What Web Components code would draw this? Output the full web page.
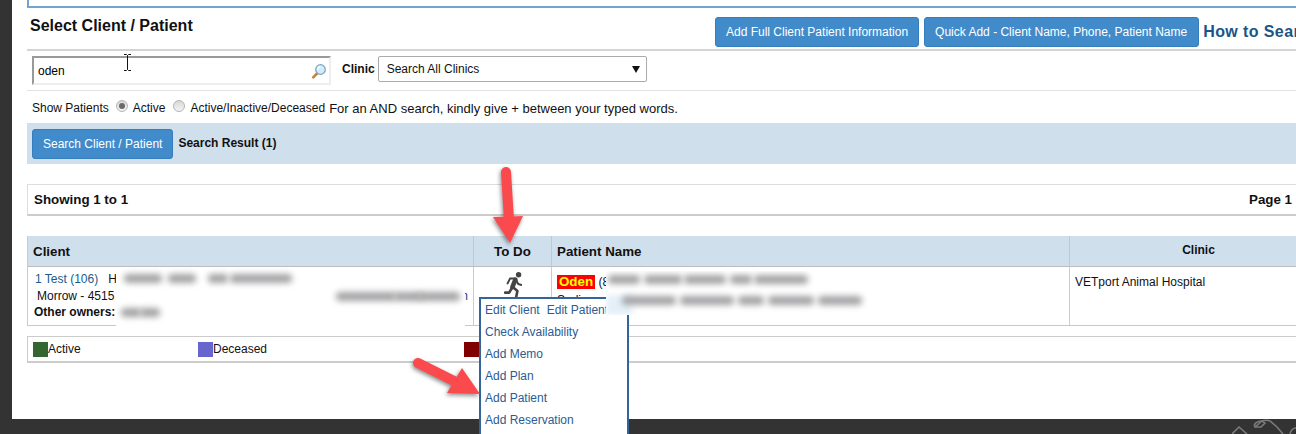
<!DOCTYPE html>
<html>
<head>
<meta charset="utf-8">
<title>Select Client / Patient</title>
<style>
html, body { margin: 0; height: 434px; overflow: hidden; background: #333; font: 12px "Liberation Sans", Arial, sans-serif; color: #000; }
</style>
</head>
<body>
<vet-page>
  <top-box></top-box>
  <title-bar heading="Select Client / Patient">
    <blue-button>Add Full Client Patient Information</blue-button>
    <blue-button style="padding-right:11px">Quick Add - Client Name, Phone, Patient Name</blue-button>
  </title-bar>
  <search-row value="oden"></search-row>
  <patient-filter></patient-filter>
  <search-band></search-band>
  <paging-bar></paging-bar>
  <client-table></client-table>
  <status-legend></status-legend>

  <action-menu></action-menu>
  <blur-mask kind="client"></blur-mask>
  <blur-mask kind="patient"></blur-mask>
  <text-cursor></text-cursor>
  <red-arrow kind="down"></red-arrow>
  <red-arrow kind="right"></red-arrow>
</vet-page>
<page-footer></page-footer>

<script>
class BaseElement extends HTMLElement {
    constructor() {
        super();
        this.attachShadow({ mode: 'open' });
    }

    connectedCallback() {
        this.shadowRoot.innerHTML = this.html();
    }
}

class VetPage extends BaseElement {
    html() {
        return `
            <style>
                :host { display: block; position: relative; margin-left: 12px; height: 419px; background: #fff; padding-left: 15px; box-sizing: border-box; }
            </style>
            <slot></slot>
        `;
    }
}

class TopBox extends BaseElement {
    html() {
        return `
            <style>
                :host { display: block; width: 1300px; height: 8px; box-sizing: border-box; border: 2px solid #70a5d2; border-top: 0; }
            </style>
        `;
    }
}

class BlueButton extends BaseElement {
    html() {
        return `
            <style>
                :host { display: inline-flex; align-items: center; height: 30px; box-sizing: border-box; padding: 0 10px; background: #428bca; border: 1px solid #357ebd; border-radius: 3px; color: #fff; font-size: 12px; white-space: nowrap; }
            </style>
            <slot></slot>
        `;
    }
}

class TitleBar extends BaseElement {
    html() {
        return `
            <style>
                :host { display: flex; width: 1300px; height: 43px; box-sizing: border-box; padding: 9px 0 0 3px; border-bottom: 2px solid #d4d4d4; white-space: nowrap; }
                h2 { flex: 1; margin: 0; font-size: 16px; line-height: 18px; font-weight: 700; color: #111; }
                .actions { display: flex; gap: 5px; width: 612px; }
                a { margin-left: -1px; font-size: 16px; line-height: 30px; font-weight: 700; color: #1b5586; letter-spacing: .4px; }
            </style>
            <h2>${this.getAttribute('heading')}</h2>
            <div class="actions"><slot></slot><a>How to Search</a></div>
        `;
    }
}

class SearchRow extends BaseElement {
    html() {
        return `
            <style>
                :host { display: flex; width: 1300px; height: 40px; box-sizing: border-box; padding: 5px 0 0 5px; border-bottom: 1px solid #e2e2e2; }
                .input { display: flex; align-items: center; justify-content: space-between; width: 299px; height: 29px; box-sizing: border-box; padding: 1px 2px 0 4px; border: 2px solid; border-color: #999 #eee #eee #999; }
                .input svg { display: block; margin-top: 1px; }
                label { margin: 0 3px 0 11px; line-height: 26px; font-weight: 700; color: #111; }
                .select { position: relative; width: 269px; height: 26px; box-sizing: border-box; padding-left: 8px; border: 1px solid #aaa; border-radius: 2px; line-height: 24px; color: #111; }
                .select i { position: absolute; right: 6px; top: 9px; border: 4px solid transparent; border-top: 7px solid #111; border-bottom: 0; }
            </style>
            <div class="input">
                <span>${this.getAttribute('value')}</span>
                <svg width="16" height="17" viewBox="0 0 16 17">
                    <path d="M6.5 10 2.2 14.4" stroke="#c8823a" stroke-width="2.6" stroke-linecap="round"/>
                    <circle cx="9.500" cy="6.500" r="4.800" fill="#d3ebfa" stroke="#7fa6bd" stroke-width="1.300"/>
                    <path d="M6.800 6.500a2.800 2.800 0 0 1 2.600-2.800" fill="none" stroke="#fff" stroke-width="1.200"/>
                </svg>
            </div>
            <label>Clinic</label>
            <div class="select">Search All Clinics<i></i></div>
        `;
    }
}

class RadioDot extends BaseElement {
    html() {
        const dot = this.hasAttribute('checked') ? '<i></i>' : '';
        return `
            <style>
                :host { display: inline-flex; align-items: center; justify-content: center; width: 12px; height: 12px; box-sizing: border-box; border: 1px solid #b4b4b4; border-radius: 50%; background: linear-gradient(#d8d8d8, #f4f4f4); }
                i { width: 6px; height: 6px; border-radius: 50%; background: #6a6a6a; }
            </style>
            ${dot}
        `;
    }
}

class PatientFilter extends BaseElement {
    html() {
        return `
            <style>
                :host { display: flex; align-items: center; height: 32px; box-sizing: border-box; padding: 2px 0 0 5px; white-space: nowrap; color: #111; }
                radio-dot { position: relative; top: -2px; }
                .first { margin: 0 5px 0 7px; }
                .second { margin: 0 5px 0 8px; }
                span { margin-left: 4px; font-size: 13px; }
            </style>
            Show Patients
            <radio-dot class="first" checked></radio-dot>Active
            <radio-dot class="second"></radio-dot>Active/Inactive/Deceased<span>For an AND search, kindly give + between your typed words.</span>
        `;
    }
}

class SearchBand extends BaseElement {
    html() {
        return `
            <style>
                :host { display: flex; align-items: flex-start; width: 1300px; height: 41px; box-sizing: border-box; padding: 6px 0 0 5px; background: #d0dfec; }
                b { margin-left: 5px; line-height: 28px; font-size: 12px; color: #111; }
            </style>
            <blue-button>Search Client / Patient</blue-button>
            <b>Search Result (1)</b>
        `;
    }
}

class PagingBar extends BaseElement {
    html() {
        return `
            <style>
                :host { display: flex; justify-content: space-between; align-items: center; width: 1300px; height: 32px; margin-top: 20px; box-sizing: border-box; padding: 0 34px 0 6px; border: 1px solid #ddd; border-bottom: 2px solid #ccc; font-size: 13.33px; font-weight: 700; color: #111; }
            </style>
            <span>Showing 1 to 1</span><span>Page 1</span>
        `;
    }
}

class ClientTable extends BaseElement {
    html() {
        return `
            <style>
                :host { display: grid; grid-template-columns: 446px 78px 518px 258px; grid-template-rows: 31px 58px; width: 1300px; margin-top: 20px; box-sizing: border-box; border-left: 1px solid #ccc; border-bottom: 1px solid #c8c8c8; color: #111; }
                .head { background: #d0dfec; border-bottom: 1px solid #bdbdbd; border-right: 1px solid #c4c8cc; box-sizing: border-box; font-size: 13.33px; font-weight: 700; line-height: 32px; padding-left: 5px; color: #111; }
                .todo { text-align: center; padding: 0; }
                .clinic { font-size: 12px; text-align: center; line-height: 29px; padding: 0; }
                .cell { border-right: 1px solid #ccc; box-sizing: border-box; padding: 4px 6px; line-height: 16.5px; overflow: hidden; white-space: nowrap; }
                .client { padding-left: 7px; }
                .client a { color: #1a5a8c; margin-right: 10px; }
                .client b { margin-left: -1px; }
                .line { display: flex; justify-content: space-between; padding-left: 3px; margin-left: -1px; width: 431px; }
                .line a { color: #1a3a8c; margin: 0; }
                .run { display: block; margin: 5px auto 0 auto; }
                .name { padding: 8px 5px; line-height: 15px; }
                .name mark { display: inline-block; height: 14px; line-height: 14px; padding: 0 2px; background: #f00; color: #ff0; font-size: 13.33px; font-weight: 700; }
                .name div { margin-top: 3px; }
                .place { border: 0; padding: 7px 5px; line-height: 16px; }
            </style>
            <div class="head">Client</div>
            <div class="head todo">To Do</div>
            <div class="head">Patient Name</div>
            <div class="head clinic">Clinic</div>
            <div class="cell client">
                <a>1 Test (106)</a>H<br>
                <div class="line"><span>Morrow - 4515</span><a>n</a></div>
                <b>Other owners:</b>
            </div>
            <div class="cell" style="padding:0">
                <svg class="run" width="18" height="25" viewBox="504 272 18 25">
                    <circle cx="518.600" cy="274.800" r="2.700" fill="#444"/>
                    <g fill="none" stroke="#444" stroke-linejoin="round" stroke-linecap="round">
                        <path d="M515.400 279.600 512.400 287" stroke-width="4.600"/>
                        <path d="M514.600 278.600H510L507.600 283.400" stroke-width="2"/>
                        <path d="M516 279.600 518.200 284 521.400 285" stroke-width="2"/>
                        <path d="M512.400 287 509.200 292.600H505" stroke-width="2.600"/>
                        <path d="M512.800 287 517.400 291 516.200 297" stroke-width="2.600"/>
                    </g>
                </svg>
            </div>
            <div class="cell name"><mark>Oden</mark> (8<div>Sadie</div></div>
            <div class="cell place">VETport Animal Hospital</div>
        `;
    }
}

class StatusLegend extends BaseElement {
    html() {
        return `
            <style>
                :host { display: grid; grid-template-columns: 165px 266px 100px; width: 1300px; height: 27px; margin-top: 10px; box-sizing: border-box; padding: 5px 0 0 5px; border: 1px solid #ccc; border-bottom-width: 2px; border-right: 0; color: #111; }
                div { display: flex; line-height: 15px; }
                i { display: block; width: 15px; height: 15px; }
            </style>
            <div><i style="background:#356630"></i>Active</div>
            <div><i style="background:#6666cc"></i>Deceased</div>
            <div><i style="background:#800000"></i></div>
        `;
    }
}

class ActionMenu extends BaseElement {
    html() {
        return `
            <style>
                :host { position: absolute; left: 467px; top: 297px; width: 150px; height: 150px; box-sizing: border-box; padding: 0 4px; background: #fff; border: 2px solid #33659a; color: #2b5b92; line-height: 22px; white-space: nowrap; }
                div { height: 22px; }
                span { margin-left: 7px; }
            </style>
            <div>Edit Client<span>Edit Patient</span></div>
            <div>Check Availability</div>
            <div>Add Memo</div>
            <div>Add Plan</div>
            <div>Add Patient</div>
            <div>Add Reservation</div>
        `;
    }
}

class BlurMask extends BaseElement {
    html() {
        const client = this.getAttribute('kind') === 'client';
        // left, top, width of each smudged word
        const words = client
            ? [[8, 7, 38], [52, 7, 28], [92, 7, 20], [114, 7, 62], [220, 25, 60], [278, 25, 28], [302, 25, 42], [5, 41, 20], [24, 41, 20]]
            : [[2, 4, 32], [38, 4, 38], [78, 4, 42], [124, 4, 22], [148, 4, 54], [16, 25, 54], [74, 25, 54], [132, 25, 26], [162, 25, 46], [212, 25, 44]];
        const box = client
            ? 'left:104px;top:267px;width:349px;height:59px;'
            : 'left:594px;top:271px;width:270px;height:44px;';
        const tint = client ? '' : '<em></em>';
        return `
            <style>
                :host { position: absolute; ${box} background: #fff; overflow: hidden; }
                i { position: absolute; height: 9px; background: #a2a2a4; border-radius: 4px; filter: blur(3px); }
                em { position: absolute; left: 0; bottom: 0; width: 26px; height: 20px; background: #e4eff8; filter: blur(3px); }
            </style>
            ${tint}
            ${words.map(w => `<i style="left:${w[0]}px;top:${w[1]}px;width:${w[2]}px"></i>`).join('')}
        `;
    }
}

class TextCursor extends BaseElement {
    html() {
        return `
            <style>
                :host { position: absolute; left: 111px; top: 54px; width: 9px; height: 17px; }
                svg { display: block; }
            </style>
            <svg width="9" height="17" viewBox="0 0 9 17">
                <path d="M1 .5h2.500l1 1 1-1H8M4.500 1.500v14M1 16.500h2.500l1-1 1 1H8" fill="none" stroke="#111" stroke-width="1"/>
            </svg>
        `;
    }
}

class RedArrow extends BaseElement {
    html() {
        const down = this.getAttribute('kind') === 'down';
        const box = down ? 'left:456px;top:160px;width:70px;height:95px;' : 'left:376px;top:350px;width:105px;height:55px;';
        const shape = down
            ? '<path d="M38 12 41 60" stroke="#fb4a4d" stroke-width="10" stroke-linecap="round"/><path d="M25 57 55 56 42 83Z" fill="#fb4a4d"/>'
            : '<path d="M30 13 72 34" stroke="#fb4a4d" stroke-width="10" stroke-linecap="round"/><path d="M74 18 59 43 92 44Z" fill="#fb4a4d"/>';
        return `
            <style>
                :host { position: absolute; ${box} }
                svg { display: block; filter: drop-shadow(-1px 2px 2px rgba(0,0,0,.45)); }
            </style>
            <svg width="100%" height="100%">${shape}</svg>
        `;
    }
}

class PageFooter extends BaseElement {
    html() {
        return `
            <style>
                :host { display: flex; justify-content: flex-end; height: 15px; }
                svg { display: block; }
            </style>
            <svg width="64" height="15" viewBox="0 0 64 15">
                <g fill="none" stroke="#7a7a7a" stroke-width="1.600">
                    <path d="M0 15 7 8 15 15"/>
                    <path d="M23 8 30 2C33 1 36 1 38 2L45 8 51 15"/>
                    <path d="M23 8C21 5 25 2 30 2L33 4 29 8Z"/>
                    <path d="M58 15C59 11 61 9 64 9"/>
                </g>
            </svg>
        `;
    }
}

window.customElements.define('vet-page', VetPage);
window.customElements.define('top-box', TopBox);
window.customElements.define('blue-button', BlueButton);
window.customElements.define('title-bar', TitleBar);
window.customElements.define('search-row', SearchRow);
window.customElements.define('radio-dot', RadioDot);
window.customElements.define('patient-filter', PatientFilter);
window.customElements.define('search-band', SearchBand);
window.customElements.define('paging-bar', PagingBar);
window.customElements.define('client-table', ClientTable);
window.customElements.define('status-legend', StatusLegend);
window.customElements.define('action-menu', ActionMenu);
window.customElements.define('blur-mask', BlurMask);
window.customElements.define('text-cursor', TextCursor);
window.customElements.define('red-arrow', RedArrow);
window.customElements.define('page-footer', PageFooter);
</script>
</body>
</html>
